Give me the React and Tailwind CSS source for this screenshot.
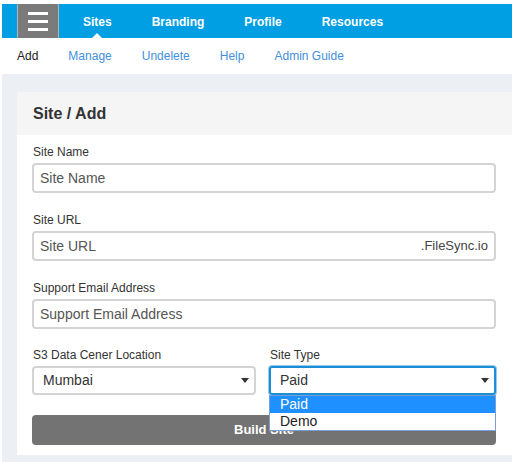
import React from "react";

const navItems = ["Sites", "Branding", "Profile", "Resources"];
const subItems = ["Manage", "Undelete", "Help", "Admin Guide"];

const Caret = () => (
  <svg width="8" height="5" viewBox="0 0 8 5" className="fill-[#333]">
    <path d="M0 0h8L4 5z" />
  </svg>
);

const Field = ({ label, placeholder, suffix }) => (
  <div className="flex flex-col">
    <label className="text-[12px] leading-[14px] text-[#333] pl-px">{label}</label>
    <div className="mt-[4px] h-[30px] flex items-center justify-between rounded-[4px] border-2 border-[#d4d4d4] px-[6px]">
      <span className="text-[14px] text-[#555]">{placeholder}</span>
      {suffix && <span className="text-[13px] text-[#444]">{suffix}</span>}
    </div>
  </div>
);

export default function App() {
  return (
    <div
      className="w-[512px] h-[462px] bg-white overflow-hidden"
      style={{ fontFamily: '"Liberation Sans", Arial, sans-serif' }}
    >
      {/* top bar */}
      <div className="mt-[4px] ml-[2px] h-[34px] bg-[#009ee3] flex items-stretch">
        <div className="ml-[15px] w-[42px] bg-[#7b7b7b] border-x border-[#b5b5b5] flex flex-col items-center justify-center gap-[5px]">
          <span className="block w-[20px] h-[3px] bg-white" />
          <span className="block w-[20px] h-[3px] bg-white" />
          <span className="block w-[20px] h-[3px] bg-white" />
        </div>
        <nav className="ml-[4px] flex">
          {navItems.map((n, i) => (
            <div key={n} className="relative px-5 pt-px flex items-center text-[12px] font-bold text-white">
              {n}
              {i === 0 && (
                <span className="absolute bottom-0 left-1/2 -translate-x-1/2 w-0 h-0 border-x-[5px] border-x-transparent border-b-[5px] border-b-white" />
              )}
            </div>
          ))}
        </nav>
      </div>

      {/* sub nav */}
      <div className="h-[36px] flex items-center pl-[17px] gap-[30px] text-[12px]">
        <span className="text-[#222]">Add</span>
        {subItems.map((s) => (
          <span key={s} className="text-[#3f8fdc]">
            {s}
          </span>
        ))}
      </div>

      {/* content */}
      <div className="ml-[2px] h-[388px] bg-[#eceff4] pt-[18px] pl-[15px]">
        <div className="bg-white">
          <div className="h-[43px] bg-[#f5f5f5] flex items-center pl-[16px]">
            <h2 className="text-[16px] font-bold text-[#333]">Site / Add</h2>
          </div>
          <div className="pl-[15px] pr-[16px] pt-[10px] pb-[10px] flex flex-col gap-[20px]">
            <Field label="Site Name" placeholder="Site Name" />
            <Field label="Site URL" placeholder="Site URL" suffix=".FileSync.io" />
            <Field label="Support Email Address" placeholder="Support Email Address" />

            <div className="grid grid-cols-[224px_1fr] gap-[13px] -mt-px">
              <div className="flex flex-col">
                <label className="text-[12px] leading-[14px] text-[#333] pl-px">S3 Data Cener Location</label>
                <div className="mt-[4px] h-[29px] flex items-center justify-between rounded-[4px] border-2 border-[#d4d4d4] pl-[9px] pr-[5px]">
                  <span className="text-[14px] text-[#333]">Mumbai</span>
                  <Caret />
                </div>
              </div>
              <div className="relative flex flex-col">
                <label className="text-[12px] leading-[14px] text-[#333] pl-px">Site Type</label>
                <div className="mt-[4px] h-[29px] flex items-center justify-between rounded-[3px] border-2 border-[#1a8fd6] ring-1 ring-[#9cc8ef] pl-[9px] pr-[5px]">
                  <span className="text-[14px] text-[#333]">Paid</span>
                  <Caret />
                </div>
                <div className="absolute left-0 right-0 top-[47px] z-10 border border-[#7a9fd6] bg-white text-[14px] leading-[17px]">
                  <div className="bg-[#1e90ff] text-white pl-[10px]">Paid</div>
                  <div className="text-[#222] pl-[10px]">Demo</div>
                </div>
              </div>
            </div>

            <button className="h-[30px] rounded-[4px] bg-[#737373] text-white text-[13px] font-bold">
              Build Site
            </button>
          </div>
        </div>
      </div>
    </div>
  );
}
